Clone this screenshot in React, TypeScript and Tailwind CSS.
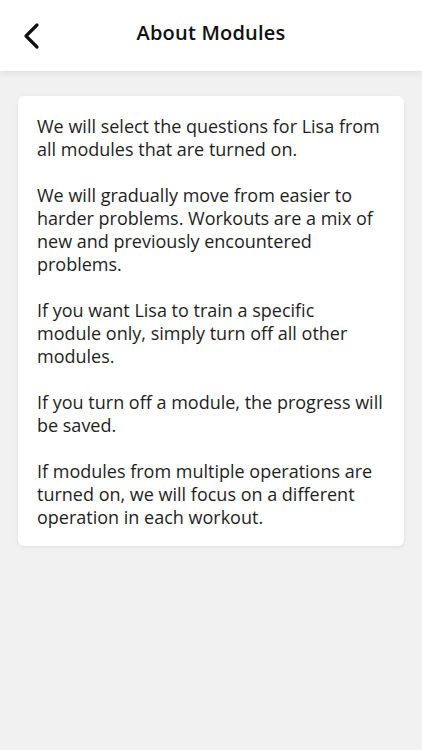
import React, { type JSX } from "react";

// lines are kept as in the design so the wrapping matches
const paragraphs: string[][] = [
  ["We will select the questions for Lisa from", "all modules that are turned on."],
  [
    "We will gradually move from easier to",
    "harder problems. Workouts are a mix of",
    "new and previously encountered",
    "problems.",
  ],
  [
    "If you want Lisa to train a specific",
    "module only, simply turn off all other",
    "modules.",
  ],
  ["If you turn off a module, the progress will", "be saved."],
  [
    "If modules from multiple operations are",
    "turned on, we will focus on a different",
    "operation in each workout.",
  ],
];

const App = (): JSX.Element => {
  return (
    <div
      className="min-h-[750px] w-full bg-[#f1f1f1]"
      style={{ fontFamily: '"Open Sans", "Noto Sans", sans-serif' }}
    >
      <header className="relative z-10 flex h-[71px] items-center justify-center bg-white pb-[5px] shadow-[0_2px_6px_rgba(0,0,0,0.08)]">
        <button className="absolute left-[18px] top-[18px] p-1" aria-label="Back">
          <svg width="22" height="28" viewBox="0 0 22 28" fill="none">
            <path
              d="M15 3L4 14l11 11"
              stroke="#111"
              strokeWidth="3.2"
              strokeLinecap="round"
              strokeLinejoin="round"
            />
          </svg>
        </button>
        <h1 className="text-[20px] font-semibold tracking-[0.2px] text-[#111]">
          About Modules
        </h1>
      </header>

      <main className="px-[18px] pt-[25px]">
        <div className="rounded-[6px] bg-white px-[19px] pt-[19px] pb-[17px] shadow-[0_1px_4px_rgba(0,0,0,0.08)]">
          {paragraphs.map((lines, i) => (
            <p
              key={i}
              className="mb-[23px] text-[18px] leading-[23px] text-[#1e1e1e] last:mb-0"
            >
              {lines.map((line, j) => (
                <span key={j} className="block whitespace-nowrap">
                  {line}
                </span>
              ))}
            </p>
          ))}
        </div>
      </main>
    </div>
  );
};

export default App;
